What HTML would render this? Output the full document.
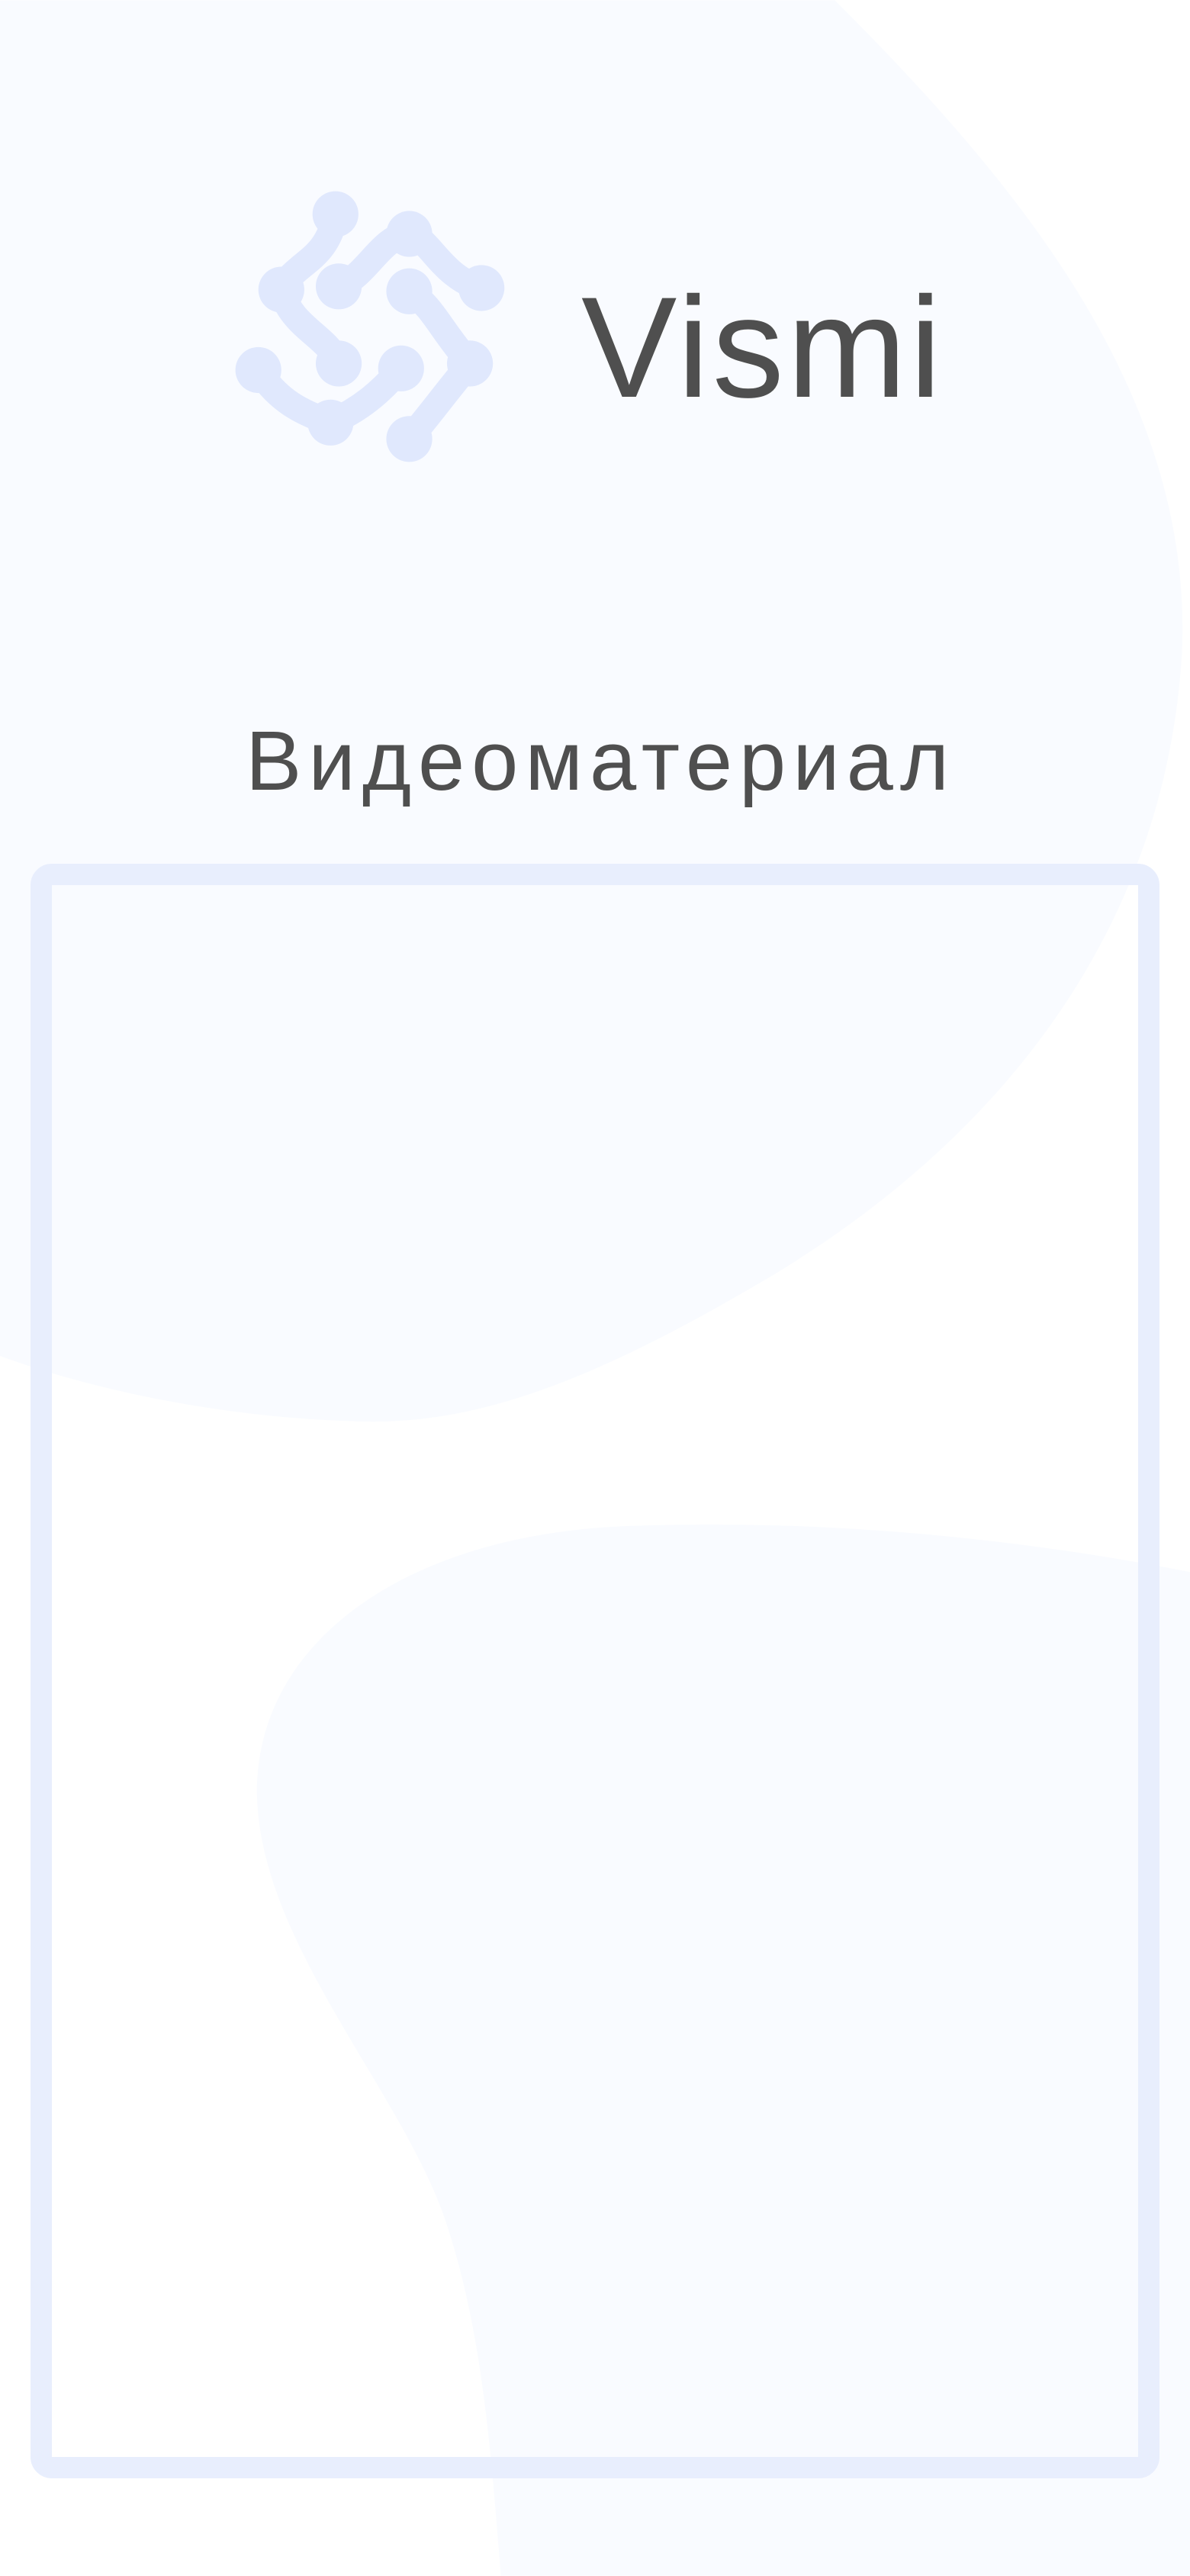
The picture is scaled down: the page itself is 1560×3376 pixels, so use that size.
<!DOCTYPE html>
<html><head><meta charset="utf-8"><style>
html,body{margin:0;padding:0}
body{width:1560px;height:3376px;position:relative;overflow:hidden;background:#fff;font-family:"Liberation Sans",sans-serif}
.bg{position:absolute;left:0;top:0}
.t{position:absolute;color:#4f4f4f;line-height:1;white-space:nowrap}
.box{position:absolute;left:40px;top:1132px;width:1424px;height:2060px;border:28px solid #e8eefd;border-radius:28px}
</style></head><body>
<svg class="bg" width="1560" height="3376" viewBox="0 0 727 1573">
<path fill="#f9fbff" d="M0 0 L510 0 C620 110 730 240 722 400 C712 560 620 690 470 780 C360 845 290 870 220 868 C140 866 60 850 0 828 Z"/>
<path fill="#f9fbff" d="M727 960 C600 935 480 928 380 932 C250 938 160 1000 157 1090 C155 1180 240 1270 270 1350 C295 1420 300 1500 306 1573 L727 1573 Z"/>
</svg>
<svg style="position:absolute;left:300px;top:242px" width="372" height="372" viewBox="140 113 173 173">
<g fill="none" stroke="#e0e8fd" stroke-width="16" stroke-linecap="round">
<path d="M205 131 C200 160 180 160 172 177 C178 200 200 205 207 222"/>
<path d="M207 175 C225 168 232 145 250 143 C262 145 270 170 294 176"/>
<path d="M250 178 C265 188 268 200 287 222 C272 240 265 250 250 268"/>
<path d="M158 226 C170 245 185 252 202 258 C220 250 232 240 245 225"/>
</g>
<g fill="#e0e8fd">
<circle cx="205" cy="131" r="14"/><circle cx="250" cy="143" r="14"/>
<circle cx="172" cy="177" r="14"/><circle cx="207" cy="175" r="14"/>
<circle cx="294" cy="176" r="14"/><circle cx="250" cy="178" r="14"/>
<circle cx="158" cy="226" r="14"/><circle cx="207" cy="222" r="14"/>
<circle cx="245" cy="225" r="14"/><circle cx="287" cy="222" r="14"/>
<circle cx="202" cy="258" r="14"/><circle cx="250" cy="268" r="14"/>
</g>
</svg>
<div class="t" style="left:762px;top:361px;font-size:188px;letter-spacing:4px">Vismi</div>
<div class="t" style="left:322px;top:943px;font-size:110px;letter-spacing:9px">Видеоматериал</div>
<div class="box"></div>
</body></html>
